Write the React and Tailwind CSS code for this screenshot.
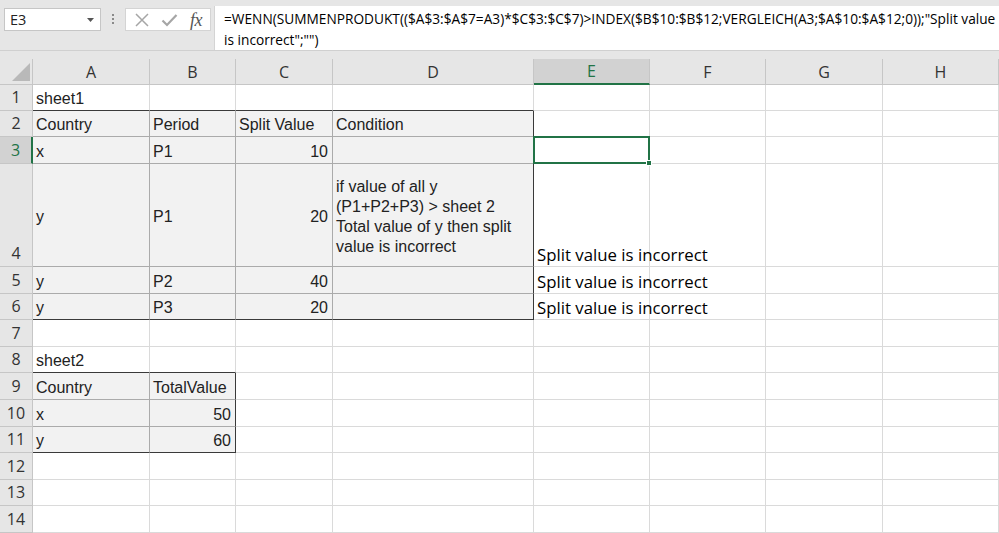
import React from 'react';

const colWidths = "grid-cols-[33px_117px_86px_97px_201px_116px_116px_117px_116px]";
const letters = ["A", "B", "C", "D", "E", "F", "G", "H"];

const rowHeights = [
  "h-[26px]", "h-[26px]", "h-[27px]", "h-[103px]", "h-[27px]", "h-[26px]", "h-[27px]",
  "h-[26px]", "h-[27px]", "h-[27px]", "h-[26px]", "h-[27px]", "h-[26px]", "h-[27px]"
];

const borderB = { dark: "border-b-[#3a3a3a]", inner: "border-b-[#ababab]", grid: "border-b-[#dadada]" };
const borderR = { dark: "border-r-[#3a3a3a]", inner: "border-r-[#ababab]", grid: "border-r-[#dadada]" };

const cells = {
  "1-1": { text: "sheet1" },
  "2-1": { text: "Country" },
  "2-2": { text: "Period" },
  "2-3": { text: "Split Value" },
  "2-4": { text: "Condition" },
  "3-1": { text: "x" },
  "3-2": { text: "P1" },
  "3-3": { text: "10", right: true },
  "4-1": { text: "y", middle: true },
  "4-2": { text: "P1", middle: true },
  "4-3": { text: "20", right: true, middle: true },
  "5-1": { text: "y" },
  "5-2": { text: "P2" },
  "5-3": { text: "40", right: true },
  "6-1": { text: "y" },
  "6-2": { text: "P3" },
  "6-3": { text: "20", right: true },
  "4-5": { text: "Split value is incorrect", calibri: true },
  "5-5": { text: "Split value is incorrect", calibri: true },
  "6-5": { text: "Split value is incorrect", calibri: true },
  "8-1": { text: "sheet2" },
  "9-1": { text: "Country" },
  "9-2": { text: "TotalValue" },
  "10-1": { text: "x" },
  "10-2": { text: "50", right: true },
  "11-1": { text: "y" },
  "11-2": { text: "60", right: true },
};

const inTable1 = (r, c) => r >= 2 && r <= 6 && c >= 1 && c <= 4;
const inTable2 = (r, c) => r >= 9 && r <= 11 && c >= 1 && c <= 2;

const bottomKind = (r, c) => {
  if (r === 1 && c >= 1 && c <= 4) return "dark";
  if (r === 6 && c >= 1 && c <= 4) return "dark";
  if (r === 8 && c >= 1 && c <= 2) return "dark";
  if (r === 11 && c >= 1 && c <= 2) return "dark";
  if (inTable1(r, c) || inTable2(r, c)) return "inner";
  return "grid";
};

const rightKind = (r, c) => {
  if (c === 4 && r >= 2 && r <= 6) return "dark";
  if (c === 2 && r >= 9 && r <= 11) return "dark";
  if (inTable1(r, c) || inTable2(r, c)) return "inner";
  return "grid";
};

const Cell = ({ r, c }) => {
  const data = cells[`${r}-${c}`];
  const filled = inTable1(r, c) || inTable2(r, c);
  const selected = r === 3 && c === 5;
  const edges = `border-r border-b ${borderR[rightKind(r, c)]} ${borderB[bottomKind(r, c)]}`;

  if (r === 4 && c === 4) {
    return (
      <div className={`relative ${edges} bg-[#f2f2f2] flex items-center px-[3px]`}>
        <div className="text-[16px] leading-[20px] text-[#222] font-['Liberation_Sans',Arial,sans-serif] pt-[3px]">
          if value of all y<br />
          (P1+P2+P3) &gt; sheet 2<br />
          Total value of y then split<br />
          value is incorrect
        </div>
      </div>
    );
  }

  return (
    <div
      className={`relative ${edges} ${filled ? 'bg-[#f2f2f2]' : 'bg-white'} flex ${data?.middle ? 'items-center pt-[4px]' : data?.calibri ? 'items-end' : 'items-end pb-[1px]'} ${data?.right ? 'justify-end pr-[4px]' : 'pl-[3px]'}`}
    >
      {data && (
        <span
          className={`whitespace-nowrap relative z-10 ${data.calibri ? "font-['Open_Sans',sans-serif] text-[16.8px] leading-[22px] text-black" : "font-['Liberation_Sans',Arial,sans-serif] text-[16px] leading-[20px] text-[#222]"}`}
        >
          {data.text}
        </span>
      )}
      {selected && (
        <div className="absolute -left-[1px] -top-[1px] -right-[1px] -bottom-[1px] border-2 border-[#217346] z-20">
          <div className="absolute -right-[4px] -bottom-[4px] w-[6px] h-[6px] bg-[#217346] border border-white" />
        </div>
      )}
    </div>
  );
};

const FormulaBar = () => (
  <div className="h-[59px] bg-[#e6e6e6]">
    <div className="flex items-start pt-[7px] h-[51px] border-b border-[#d0d0d0]">
      <div className="shrink-0 ml-[4px] mt-[1px] w-[97px] h-[23px] bg-white border border-[#c6c6c6] flex items-center justify-between pl-[5px] pr-[6px]">
        <span className="font-['Open_Sans',sans-serif] text-[14.5px] text-[#222]">E3</span>
        <svg width="7" height="4" viewBox="0 0 7 4"><path d="M0 0 L7 0 L3.5 4 Z" fill="#555" /></svg>
      </div>
      <div className="shrink-0 w-[24px] h-[24px] flex flex-col items-center justify-center gap-[2px]">
        <div className="w-[2px] h-[2px] bg-[#8a8a8a]" />
        <div className="w-[2px] h-[2px] bg-[#8a8a8a]" />
        <div className="w-[2px] h-[2px] bg-[#8a8a8a]" />
      </div>
      <div className="shrink-0 mt-[1px] w-[86px] h-[23px] bg-white border border-[#d4d4d4] flex items-center pl-[8px]">
        <svg width="16" height="16" viewBox="0 0 16 16" className="mr-[11px]">
          <path d="M2 2 L14 14 M14 2 L2 14" stroke="#a6a6a6" strokeWidth="1.5" />
        </svg>
        <svg width="17" height="16" viewBox="0 0 17 16" className="mr-[12px]">
          <path d="M1.5 8.5 L6 13 L15.5 3" stroke="#a6a6a6" strokeWidth="2.2" fill="none" />
        </svg>
        <span className="font-['Liberation_Serif',serif] italic text-[18px] leading-none text-[#555] tracking-[-0.5px]">fx</span>
      </div>
      <div className="ml-[3px] -mt-[1px] flex-1 min-w-0 h-[44px] bg-white border-l border-[#d4d4d4] pl-[9px] pt-[2px] overflow-hidden">
        <div className="font-['Open_Sans',sans-serif] text-[13.7px] leading-[21px] text-black whitespace-nowrap">
          =WENN(SUMMENPRODUKT(($A$3:$A$7=A3)*$C$3:$C$7)&gt;INDEX($B$10:$B$12;VERGLEICH(A3;$A$10:$A$12;0));"Split value
          <br />
          is incorrect";"")
        </div>
      </div>
    </div>
  </div>
);

export default function App() {
  const rowNums = Array.from({ length: 14 }, (_, i) => i + 1);
  return (
    <div className="w-[999px] h-[533px] overflow-hidden bg-white">
      <FormulaBar />
      <div className={`grid ${colWidths}`}>
        {/* header row */}
        <div className="h-[26px] bg-[#e6e6e6] border-r border-b border-[#c6c6c6] flex items-end justify-end pr-[2px] pb-[3px]">
          <svg width="18" height="18" viewBox="0 0 18 18"><path d="M18 0 L18 18 L0 18 Z" fill="#b9b9b9" /></svg>
        </div>
        {letters.map((l) => (
          <div
            key={l}
            className={`h-[26px] flex items-center justify-center font-['Open_Sans',sans-serif] text-[16px] border-r border-r-[#c6c6c6] ${l === 'E' ? 'bg-[#d2d2d2] text-[#217346] border-b-2 border-b-[#217346]' : 'bg-[#e6e6e6] text-[#333] border-b border-b-[#c6c6c6]'}`}
          >
            {l}
          </div>
        ))}
        {rowNums.map((r) => (
          <React.Fragment key={r}>
            <div
              className={`${rowHeights[r - 1]} flex items-end justify-center pb-[1px] font-['Open_Sans',sans-serif] text-[16px] border-b border-b-[#c6c6c6] ${r === 3 ? 'bg-[#d2d2d2] text-[#217346] border-r-2 border-r-[#217346]' : 'bg-[#e6e6e6] text-[#333] border-r border-r-[#c6c6c6]'}`}
            >
              {r}
            </div>
            {letters.map((_, i) => (
              <Cell key={i} r={r} c={i + 1} />
            ))}
          </React.Fragment>
        ))}
      </div>
    </div>
  );
}
